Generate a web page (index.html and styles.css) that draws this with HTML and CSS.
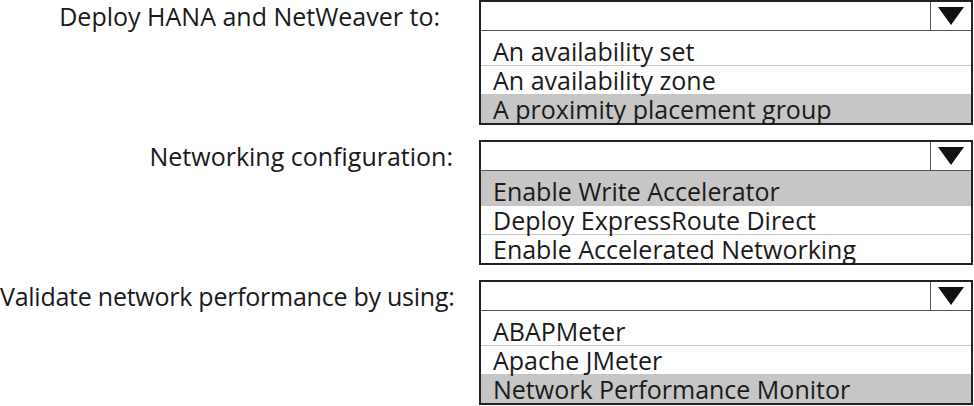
FILE: index.html
```html
<!DOCTYPE html>
<html lang="en">
<head>
  <meta charset="UTF-8" />
  <title>SAP on Azure - Answer Area</title>
  <link rel="stylesheet" href="styles.css">
</head>
<body>

  <div class="answer-area">

    <div class="question">
      <div class="label label-short">Deploy HANA and NetWeaver to:</div>
      <div class="dropdown">
        <div class="select">
          <span class="value"></span>
          <span class="arrow">
            <svg width="26" height="18" viewBox="0 0 26 18"><polygon points="0,0 26,0 13,18" fill="#111"/></svg>
          </span>
        </div>
        <ul class="options">
          <li>An availability set</li>
          <li>An availability zone</li>
          <li class="selected">A proximity placement group</li>
        </ul>
      </div>
    </div>

    <div class="question">
      <div class="label">Networking configuration:</div>
      <div class="dropdown">
        <div class="select">
          <span class="value"></span>
          <span class="arrow">
            <svg width="26" height="18" viewBox="0 0 26 18"><polygon points="0,0 26,0 13,18" fill="#111"/></svg>
          </span>
        </div>
        <ul class="options">
          <li class="selected">Enable Write Accelerator</li>
          <li>Deploy ExpressRoute Direct</li>
          <li>Enable Accelerated Networking</li>
        </ul>
      </div>
    </div>

    <div class="question">
      <div class="label label-long">Validate network performance by using:</div>
      <div class="dropdown">
        <div class="select">
          <span class="value"></span>
          <span class="arrow">
            <svg width="26" height="18" viewBox="0 0 26 18"><polygon points="0,0 26,0 13,18" fill="#111"/></svg>
          </span>
        </div>
        <ul class="options">
          <li>ABAPMeter</li>
          <li>Apache JMeter</li>
          <li class="selected">Network Performance Monitor</li>
        </ul>
      </div>
    </div>

  </div>

</body>
</html>
```

FILE: styles.css
```css
body {
  margin: 0;
  background: #fff;
  color: #1a1a1a;
  font-family: "Open Sans", "Noto Sans", sans-serif;
  font-size: 25px;
}

.answer-area {
  display: flex;
  flex-direction: column;
}

.question {
  display: flex;
  align-items: flex-start;
  margin-bottom: 15px;
}

.label {
  width: 479px;
  box-sizing: border-box;
  padding-right: 26px;
  padding-top: 2px;
  line-height: 28px;
  text-align: right;
  white-space: nowrap;
}

.label-short {
  padding-right: 39px;
}

.label-long {
  letter-spacing: -0.25px;
}

.dropdown {
  width: 494px;
  box-sizing: border-box;
  border: 2px solid #222;
}

.select {
  display: flex;
  height: 28px;
  border-bottom: 1px solid #555;
}

.value {
  flex: 1;
}

.arrow {
  width: 40px;
  display: flex;
  align-items: center;
  justify-content: center;
  border-left: 1px solid #555;
}

.options {
  list-style: none;
  margin: 0;
  padding: 0;
}

.options li {
  padding-left: 12px;
  line-height: 28px;
}

.options li:first-child {
  padding-top: 6px;
}

.options li + li {
  border-top: 1px solid #c4c4c4;
}

.options li.selected {
  background: #c6c6c6;
}
```
